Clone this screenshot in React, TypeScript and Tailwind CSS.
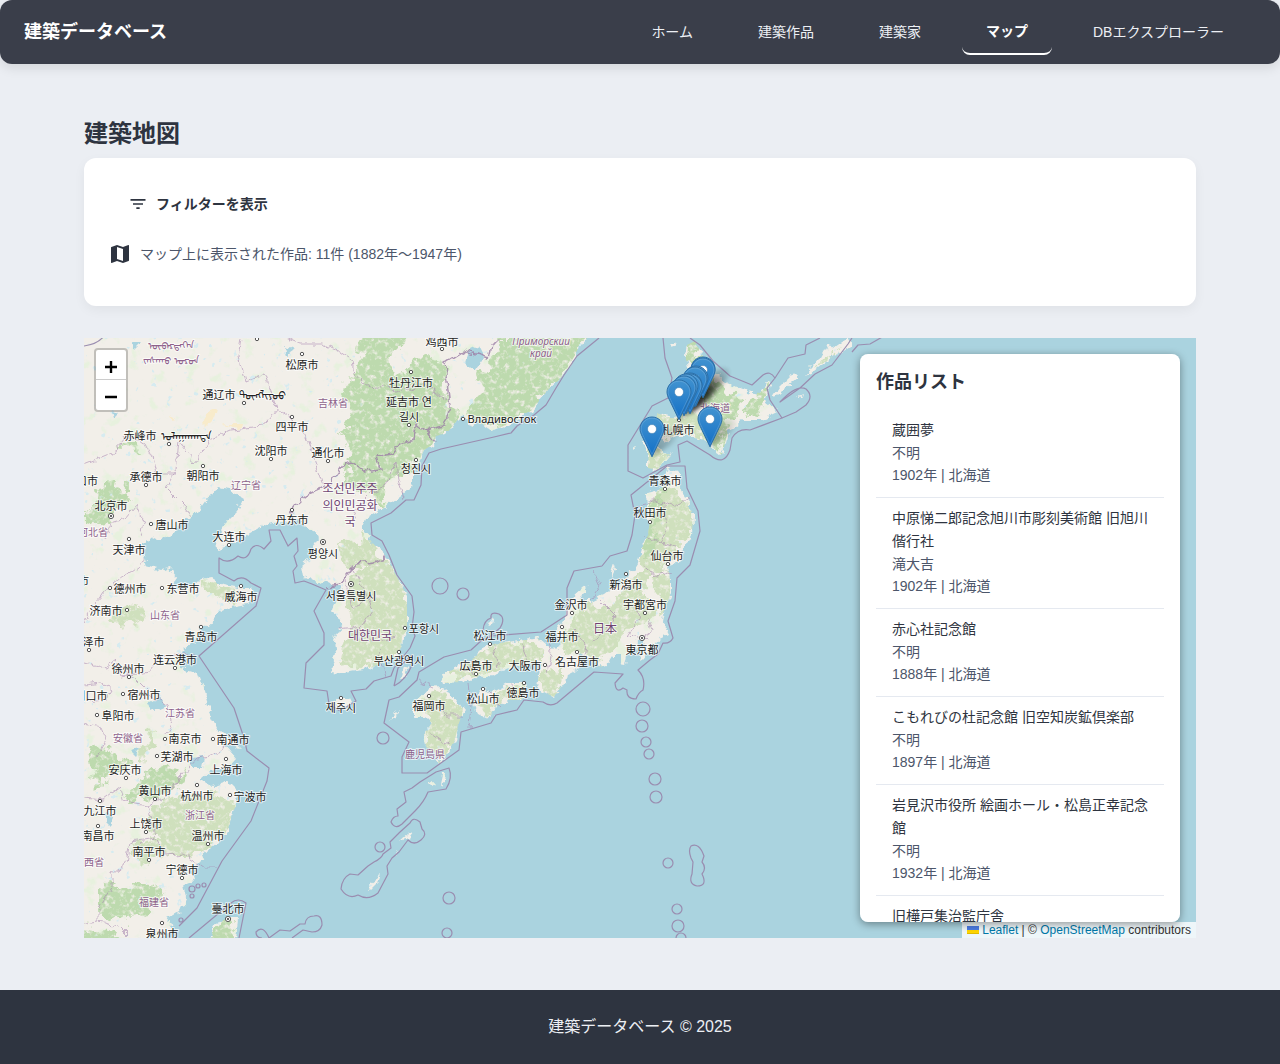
import React from "react";

const NAV = ["ホーム", "建築作品", "建築家", "マップ", "DBエクスプローラー"];

const WORKS = [
  { title: "蔵囲夢", architect: "不明", year: 1902 },
  { title: "中原悌二郎記念旭川市彫刻美術館 旧旭川偕行社", architect: "滝大吉", year: 1902 },
  { title: "赤心社記念館", architect: "不明", year: 1888 },
  { title: "こもれびの杜記念館 旧空知炭鉱倶楽部", architect: "不明", year: 1897 },
  { title: "岩見沢市役所 絵画ホール・松島正幸記念館", architect: "不明", year: 1932 },
  { title: "旧樺戸集治監庁舎", architect: "不明", year: 1919 },
];

const LAND = [
  "M587 338 577 352 561 378 547 391 531 411 511 423 491 431 477 421 471 426 464 413 459 418 447 433 436 436 432 445 424 450 419 461 414 471 414 485 404 493 384 508 366 519 362 528 368 537 377 548 386 556 396 575 407 595 407 615 407 630 402 637 401 650 394 657 381 663 371 668 357 671 344 673 332 671 336 655 334 641 342 625 332 610 337 598 341 588 327 581 317 583 304 576 302 565 314 555 314 545 318 538 312 530 301 521 291 521 274 523 264 525 250 533 237 541 217 548 216 541 221 530 227 521 237 511 244 498 231 490 217 488 206 501 199 511 184 521 171 535 158 541 150 537 144 545 144 556 147 566 161 570 169 568 177 578 174 588 184 590 197 581 212 578 224 585 240 588 251 588 257 598 247 605 231 608 217 615 209 626 199 625 202 634 194 641 184 648 179 660 181 668 197 673 204 691 211 715 217 728 227 736 241 749 224 743 237 758 227 768 211 771 201 780 212 786 227 781 237 791 236 805 231 818 227 833 217 843 207 851 201 861 191 871 194 881 184 885 187 898 181 911 167 919 174 929 160 938 160 950 60 950 60 320 590 320Z",
  "M687 345 695 341 700 351 710 368 727 383 747 391 760 393 770 380 765 400 778 411 760 420 743 420 728 431 722 455 710 445 690 435 677 435 667 441 660 438 657 448 672 456 663 461 658 470 648 468 648 455 643 441 655 435 657 413 677 418 683 405 690 388 688 368 685 355Z",
  "M667 468 680 473 680 488 688 501 693 515 692 535 683 551 680 561 668 565 670 581 670 595 663 615 662 623 668 635 655 641 650 650 643 658 640 660 645 640 638 640 637 650 627 653 625 665 620 664 620 655 613 655 607 665 600 667 590 660 580 654 578 660 581 665 576 670 566 675 564 683 554 697 544 692 537 687 539 675 541 665 531 663 511 667 497 672 487 678 474 677 461 682 444 683 441 675 457 668 474 658 487 645 521 640 537 637 544 643 554 650 561 643 557 630 567 615 567 608 574 595 586 585 587 591 577 601 591 601 604 595 613 588 625 578 637 565 642 548 648 535 650 521 648 505 647 493 658 490 667 485 664 474Z",
  "M479 693 484 688 491 692 507 683 524 683 527 693 521 700 507 700 496 707 489 718 479 713 474 703Z",
  "M429 688 441 687 454 697 464 710 459 723 454 743 447 753 439 765 436 753 431 750 426 747 424 733 432 723 426 717 414 717 414 703 421 697Z",
  "M207 950 214 925 227 918 237 918 234 950Z",
  "M331 703 338 698 350 698 352 702 344 707 335 708Z",
  "M772 398 780 386 792 374 798 378 786 388 777 397Z",
  "M805 375 820 358 827 345 835 347 848 338 852 345 832 357 813 372Z",
  "M440 785l3-13 2 1-1 8-3 6ZM429 783l4-3 3 3-4 3ZM401 841 409 834 413 832 408 839ZM611 574l3-9 1 5-4 8ZM633 449l2-4 2 2-2 4ZM670 345l3-4 2 4-2 3ZM488 622l4-2 2 3-4 2ZM795 398l8-2-3 2Z",
  "M367 892 371 882 381 875 379 880 371 888ZM390 719 397 712 400 710 396 716ZM396 849l2 2-1 3ZM401 681 405 667 408 668 405 678Z",
];

/* Densely wooded ranges, drawn as solid tints. */
const FOREST = [
  "M592 334 577 352 561 378 547 391 531 411 511 423 491 431 480 420 470 418 474 400 482 390 477 380 488 366 500 352 494 334Z",
  "M364 334h42l-5 12-12 12 8 14 18 4 8 16 24 6 10 10-4 22-14 8-12 12-14 8-6 20-18 2-10 2 8 12-4 12-14-14-14 4-8-22 4-28-10-10 10-24-8-18 8-16Z",
  "M404 364l18-6 22 6 2 40-20-6-12-18-8-4Z",
  "M84 515 105 486 122 484 134 498 118 506 112 520 96 524 84 522Z",
  "M120 444 134 440 140 454 128 448Z",
  "M127 800 140 776 158 768 176 774 188 770 182 784 166 792 152 802 136 798 122 802Z",
  "M98 894 110 884 124 890 140 884 158 886 164 896 156 906 150 914 130 916 118 922 98 918Z",
  "M88 752 100 746 118 754 128 766 110 774 98 790 92 776Z",
  "M84 926 100 928 120 938 120 945 84 945Z",
  "M687 345 695 341 700 354 710 376 727 390 742 396 736 416 726 426 722 455 704 438 706 420 700 400 692 384 690 366Z",
  "M764 386 770 382 766 400 758 412 746 416 750 402Z",
  "M664 480 672 478 662 500 658 530 650 560 640 548 650 520 650 500Z",
  "M214 928 228 920 236 920 230 945 210 945Z",
];

/* Lighter hill country. */
const HILLS = [
  "M150 814 166 800 196 792 218 796 234 800 232 816 226 832 212 844 200 854 186 858 170 858 162 842 148 830Z",
  "M364 532 386 556 396 575 409 595 408 630 402 640 401 650 384 664 360 668 340 662 346 640 352 620 346 600 350 580 364 566Z",
  "M340 548 360 540 372 548 366 564 346 570Z",
  "M657 413 677 418 686 412 700 420 712 434 722 455 700 438 680 434 662 436 658 448 672 456 660 470 648 468 648 440Z",
  "M664 490 680 488 692 512 692 535 676 550 670 563 656 575 640 592 656 606 646 622 622 634 612 655 594 664 584 650 566 655 562 640 574 618 590 604 612 606 630 586 644 560 650 530 650 496Z",
  "M668 566 672 580 672 598 662 618 656 600 658 580Z",
  "M442 682 460 668 482 650 521 640 540 640 546 652 534 664 500 668 478 676Z",
  "M478 706 494 694 507 684 526 684 524 698 500 704 488 718Z",
  "M540 670 562 668 562 684 554 697 540 690Z",
  "M418 700 434 690 452 698 464 710 456 740 446 753 438 765 428 748 426 730 432 720Z",
  "M206 578 220 584 236 592 234 602 218 598 204 590Z",
  "M112 614 140 608 150 618 134 626 114 622Z",
  "M146 740 156 730 150 750 144 764 138 752Z",
  "M130 842 150 838 166 848 150 862 136 858Z",
  "M813 370 826 352 838 348 828 360Z",
];

const SEA_BORDER = [
  "M599 338 577 356 564 375 556 388 546 405 534 415 517 426 511 433 494 437 441 449 429 453 422 466 421 485 414 500 406 500 391 513 371 523 372 535 382 541 389 555 397 575 412 596 414 612 412 628 415 636 410 648 394 668 391 676 374 681 366 689 351 691 356 701 340 711 329 704 327 691 304 688 306 663 324 645 324 633 314 611 326 590 312 584 304 581 295 583 293 571 297 566 294 556 298 551 297 538 288 546 280 530 269 530 271 541 264 549Q256 542 251 549 247 562 238 556 228 565 219 558V573L234 581Q242 574 251 583L261 588 256 606 199 656 234 708 244 738 247 751 269 768 267 781 251 821 222 861 197 908 179 926",
  "M189 938 231 903Q238 897 246 903L239 938",
  "M663 338 665 358 672 378 668 398 652 406 628 445 628 471 643 478 667 465 680 462 678 445 687 441 710 455Q724 467 730 450L732 438Q738 428 750 430L782 418 770 400 767 388 775 378Q770 370 763 375L752 385 730 376 713 361 700 345 690 338",
  "M602 566 610 556 627 551 632 535 635 515 631 495 667 466H685L687 488 698 511 700 531 690 565 677 578 675 601 668 621 673 638Q670 644 663 643L658 654 650 660 638 670Q646 678 643 690 638 693 636 699 626 699 627 690L623 688Q616 694 615 683L623 674 594 672 557 703Q550 707 543 702L524 700 517 710 496 715 491 723 461 732 459 750 427 773 402 773 402 757 409 742 384 723 389 700 399 697 417 680 419 672 444 657 471 650 482 640 491 636 541 632 567 615 567 588 574 571 602 566",
  "M483 630Q484 620 491 618 490 611 499 614 506 618 500 628L488 638",
  "M420 782 436 772 449 768Q453 778 446 789L428 792Q424 802 415 811L402 824Q395 830 391 822 393 816 398 816L397 809 406 802 404 792 412 788Z",
  "M410 823Q413 816 420 822L422 829Q428 834 421 840 414 846 408 840L399 852 392 858 387 866 388 874 378 893Q368 901 358 895 348 900 341 889 342 878 350 874L358 875 368 866 374 862Q382 858 383 854L391 848 390 842 400 832Z",
  "M775 378 788 358 805 354 806 345 820 338 M852 338 848 344 832 365 815 374 800 388 780 402Q797 384 806 389 814 396 806 405L796 412 782 418 M852 352 858 345 870 344 884 336 M262 938Q256 938 256 932 263 924 269 938 M269 938 280 930 290 931 300 924 305 924Q306 916 314 916 322 914 322 925 320 932 312 932L303 930 292 938",
  "M394 686 398 668 412 655 M394 686Q406 680 412 665",
  "M691 846Q699 842 704 856L702 862Q707 868 702 874 708 886 697 886 688 884 692 874L693 862 691 858Q688 850 691 846Z",
  "M84 346Q98 344 104 336",
];

const RINGS: [number, number, number][] = [
  [440, 586, 8], [463, 594, 6], [643, 709, 7], [642, 726, 6], [646, 742, 5], [649, 754, 5], [655, 779, 6],
  [656, 797, 6], [668, 863, 5], [677, 909, 5], [678, 926, 6], [681, 938, 5], [449, 898, 6], [447, 933, 5],
  [383, 738, 6], [380, 847, 5], [192, 889, 3], [198, 886, 2], [204, 885, 2], [192, 896, 2], [181, 920, 2],
];

const INLAND_BORDER = [
  "M241 338 238 356 245 382 264 374 271 392 277 408 262 426 232 430 210 440 194 462 179 442 176 470 166 488 184 506 191 518",
  "M286 338 300 344 322 344 340 352 352 360 354 374 370 388 384 386",
  "M277 408 298 424 306 436 314 460 324 486",
  "M84 464 104 456 118 450 124 436 146 444 152 456 156 474 176 474",
  "M104 540 112 522 126 518 136 506 144 524 140 538",
  "M84 622 100 598 108 586 130 572 146 560",
  "M84 662 106 668 116 660 122 676 150 672 162 656 196 654",
  "M84 684 100 682 112 690 106 700 84 702 M84 724 100 728 106 742 98 756",
  "M112 664 134 678 150 694 168 706 172 720 166 734",
  "M84 798 104 800 120 788 124 802 148 806 156 838 166 856 184 854 196 862 204 868 218 868",
  "M148 806 170 792 180 776 196 758 212 756 226 746",
  "M156 838 130 842 126 862 112 874 112 888 98 910 98 922 84 924",
  "M98 922 118 926 130 938",
  "M384 386 400 392 424 384 446 400",
  "M398 480 404 498 M398 480 396 462 384 488 372 492 360 504 352 520",
  "M351 566 364 590 372 610 360 628 384 640 398 636 M366 600 352 608 346 580",
  "M338 628 354 626 372 640 M378 650 386 676",
  "M636 505 658 500 672 506 690 498 M664 504 666 530 660 542 642 536 M660 542 676 546 M642 566 656 576 672 572",
  "M600 600 616 616 606 632 592 640 M630 600 640 618 628 636 648 640 M648 618 652 632 640 640",
  "M574 630 586 644 584 656 M546 640 552 656 548 672 M520 642 528 660 M494 646 498 668 M470 660 474 676",
  "M490 692 500 706 M512 684 514 700 M432 700 446 716 462 716 M430 734 444 744 450 742",
  "M417 680 432 686 M470 684 472 706 470 728 M594 572 600 586 590 600",
];

const KOREA_BORDER = [
  "M434 441 427 431 436 427 444 426 450 408 447 381 444 363 464 350 489 358 492 345 499 338",
  "M427 431 416 424 414 440 400 444 394 452 376 454 380 470 366 472 352 462 344 464 330 484 312 492 296 504 290 512",
  "M326 586 340 584 356 564 372 562 386 558",
];

const LAKES = [
  "M470 350 478 346 484 358 474 372 466 364Z", "M148 704 160 698 166 706 152 712Z", "M192 758 204 756 202 768 192 768Z",
  "M106 812 114 814 110 826 106 822Z", "M130 750 140 748 136 756Z", "M286 346 294 350 288 354Z",
  "M112 412 118 414 114 418Z", "M132 342 142 342 134 350Z",
];

type Label = [string, number, number];

const CITIES: Label[] = [
  ["松原市", 302, 369], ["通辽市", 219, 399], ["四平市", 292, 431], ["赤峰市", 140, 440], ["沈阳市", 271, 455],
  ["通化市", 328, 457], ["承德市", 146, 481], ["朝阳市", 203, 480], ["口市", 87, 485], ["北京市", 111, 510],
  ["唐山市", 172, 529], ["丹东市", 292, 524], ["大连市", 229, 541], ["天津市", 129, 554], ["德州市", 130, 593],
  ["东营市", 183, 593], ["威海市", 241, 601], ["济南市", 106, 615], ["青岛市", 201, 641], ["菏泽市", 88, 646],
  ["连云港市", 175, 664], ["徐州市", 128, 673], ["周口市", 91, 700], ["宿州市", 144, 699], ["阜阳市", 118, 720],
  ["南京市", 185, 743], ["南通市", 233, 744], ["芜湖市", 177, 761], ["安庆市", 125, 774], ["上海市", 226, 774],
  ["黄山市", 155, 795], ["杭州市", 197, 800], ["宁波市", 250, 801], ["九江市", 100, 815], ["上饶市", 146, 828],
  ["南昌市", 98, 840], ["温州市", 208, 840], ["南平市", 149, 856], ["宁德市", 182, 874], ["臺北市", 228, 913],
  ["泉州市", 162, 938], ["鸡西市", 442, 346], ["牡丹江市", 411, 387], ["延吉市 연", 409, 406], ["길시", 409, 421],
  ["청진시", 416, 473], ["평양시", 323, 558], ["서울특별시", 351, 600], ["포항시", 424, 633], ["부산광역시", 399, 665],
  ["제주시", 341, 712], ["福岡市", 429, 710], ["広島市", 476, 670], ["松江市", 490, 640], ["松山市", 483, 703],
  ["徳島市", 523, 697], ["大阪市", 525, 670], ["福井市", 562, 641], ["名古屋市", 577, 666], ["金沢市", 571, 609],
  ["新潟市", 626, 589], ["宇都宮市", 645, 609], ["東京都", 642, 654], ["仙台市", 667, 560], ["秋田市", 650, 517],
  ["青森市", 665, 485], ["札幌市", 678, 434], ["州市", 78, 585],
];

const PROVINCES: Label[] = [
  ["吉林省", 333, 407], ["辽宁省", 246, 489], ["河北省", 93, 536], ["山东省", 165, 619], ["江苏省", 180, 717],
  ["安徽省", 128, 742], ["浙江省", 200, 819], ["江西省", 89, 866], ["福建省", 154, 906], ["鹿児島県", 425, 758],
  ["北海道", 715, 412],
];

const COUNTRIES: Label[] = [["조선민주주", 350, 493], ["의인민공화", 350, 510], ["국", 350, 526], ["대한민국", 370, 640], ["日本", 605, 633]];

const DOTS: [number, number][] = [
  [302, 354], [257, 339], [244, 403], [292, 417], [169, 444], [271, 459], [328, 461], [146, 485], [203, 466], [151, 524],
  [292, 510], [229, 545], [129, 539], [110, 588], [162, 588], [241, 586], [127, 610], [201, 627], [89, 650], [175, 668],
  [129, 677], [123, 694], [97, 715], [165, 739], [213, 739], [157, 756], [126, 778], [226, 759], [155, 799], [197, 785],
  [230, 795], [100, 801], [146, 832], [98, 826], [208, 844], [149, 860], [182, 878], [162, 923], [442, 349], [411, 372],
  [409, 425], [463, 419], [416, 460], [405, 628], [399, 652], [341, 698], [429, 696], [476, 674], [490, 644], [483, 689],
  [524, 683], [545, 665], [562, 627], [577, 652], [572, 613], [626, 574], [645, 613], [668, 564], [650, 522], [665, 489],
  [679, 420],
];

const CAPITALS: [number, number][] = [[111, 516], [323, 542], [351, 584], [642, 638], [228, 919]];

const MARKERS: [number, number][] = [
  [703, 369], [703, 370], [696, 378], [695, 379], [690, 385], [690, 386], [686, 386], [684, 388], [679, 392], [652, 429], [710, 419],
];

function MapCanvas() {
  return (
    <svg
      className="block h-full w-full"
      viewBox="84 338 1112 600"
      preserveAspectRatio="xMidYMid slice"
      role="img"
      aria-label="建築作品の地図"
    >
      <defs>
        <filter id="coast" x="0" y="0" width="100%" height="100%">
          <feTurbulence type="fractalNoise" baseFrequency="0.13" numOctaves="3" seed="4" result="n" />
          <feDisplacementMap in="SourceGraphic" in2="n" scale="9" xChannelSelector="R" yChannelSelector="G" result="land" />
          <feTurbulence type="fractalNoise" baseFrequency="0.07" numOctaves="4" seed="13" />
          <feColorMatrix type="matrix" values="0 0 0 0 0.80  0 0 0 0 0.88  0 0 0 0 0.73  7 0 0 0 -4.2" />
          <feComposite in2="land" operator="in" result="scrub" />
          <feTurbulence type="fractalNoise" baseFrequency="0.12" numOctaves="3" seed="33" />
          <feColorMatrix type="matrix" values="0 0 0 0 0.67  0 0 0 0 0.83  0 0 0 0 0.87  0 14 0 0 -10" />
          <feComposite in2="land" operator="in" result="ponds" />
          <feMerge>
            <feMergeNode in="land" />
            <feMergeNode in="scrub" />
            <feMergeNode in="ponds" />
          </feMerge>
        </filter>
        <filter id="woods" x="-5%" y="-5%" width="110%" height="110%">
          <feTurbulence type="fractalNoise" baseFrequency="0.08" numOctaves="5" seed="9" result="n" />
          <feDisplacementMap in="SourceGraphic" in2="n" scale="22" xChannelSelector="R" yChannelSelector="G" result="d" />
          <feTurbulence type="fractalNoise" baseFrequency="0.2" numOctaves="3" seed="21" />
          <feColorMatrix type="matrix" values="0 0 0 0 0  0 0 0 0 0  0 0 0 0 0  3 0 0 0 -0.5" result="m" />
          <feComposite in="d" in2="m" operator="in" />
        </filter>
        <filter id="rough" x="-10%" y="-10%" width="120%" height="120%">
          <feTurbulence type="fractalNoise" baseFrequency="0.12" numOctaves="2" seed="6" result="n" />
          <feDisplacementMap in="SourceGraphic" in2="n" scale="9" xChannelSelector="R" yChannelSelector="G" />
        </filter>
        <filter id="soft" x="-50%" y="-50%" width="200%" height="200%">
          <feGaussianBlur stdDeviation="2" />
        </filter>
        <clipPath id="land-area">
          {LAND.map((d) => (
            <path key={d} d={d} />
          ))}
        </clipPath>
        <linearGradient id="pin" x1="0" y1="0" x2="0" y2="1">
          <stop offset="0" stopColor="#4293d0" />
          <stop offset="1" stopColor="#126fc6" />
        </linearGradient>
        <linearGradient id="pin-shade" x1="0" y1="1" x2="1" y2="0">
          <stop offset="0" stopColor="#000" stopOpacity="0.7" />
          <stop offset="1" stopColor="#000" stopOpacity="0.05" />
        </linearGradient>
      </defs>

      <rect x="-1000" y="0" width="3280" height="1300" fill="#aad3df" />
      <g filter="url(#coast)" fill="#f2efe9">
        {LAND.map((d) => (
          <path key={d} d={d} />
        ))}
      </g>
      <g clipPath="url(#land-area)">
        <g filter="url(#woods)" fill="#cfe0bd">
          {HILLS.map((d) => (
            <path key={d} d={d} />
          ))}
        </g>
        <g filter="url(#woods)" fill="#bddaae">
          {FOREST.map((d) => (
            <path key={d} d={d} />
          ))}
        </g>
        <g filter="url(#rough)" fill="#f8ebcb">
          <path d="M200 424 206 414 216 410 214 418 204 428ZM222 424 244 424 238 428ZM168 416 176 418 174 421Z" />
        </g>
      </g>
      <g filter="url(#rough)" fill="#aad3df">
        {LAKES.map((d) => (
          <path key={d} d={d} />
        ))}
      </g>
      <g filter="url(#rough)" fill="none" stroke="#a584ae" strokeOpacity="0.55">
        {INLAND_BORDER.map((d) => (
          <path key={d} d={d} />
        ))}
      </g>
      <g filter="url(#rough)" fill="none" stroke="#9c7fa6" strokeOpacity="0.8" strokeWidth="1.5">
        {KOREA_BORDER.map((d) => (
          <path key={d} d={d} />
        ))}
      </g>
      <g fill="none" stroke="#9a8db0" strokeWidth="1.2" strokeLinejoin="round">
        {SEA_BORDER.map((d) => (
          <path key={d} d={d} />
        ))}
        {RINGS.map(([x, y, r]) => (
          <circle key={`${x}-${y}`} cx={x} cy={y} r={r} />
        ))}
      </g>

      <g fill="#fff" stroke="#555" strokeWidth="1">
        {DOTS.map(([x, y]) => (
          <circle key={`${x}-${y}`} cx={x} cy={y} r="1.7" />
        ))}
        {CAPITALS.map(([x, y]) => (
          <g key={`${x}-${y}`}>
            <circle cx={x} cy={y} r="2.6" />
            <circle cx={x} cy={y} r="1" fill="#333" stroke="none" />
          </g>
        ))}
      </g>

      <g
        textAnchor="middle"
        strokeLinejoin="round"
        className="[font-family:'Noto_Sans','Noto_Sans_CJK_SC','Noto_Sans_CJK_KR',sans-serif] [paint-order:stroke]"
        stroke="#fff"
        strokeOpacity="0.7"
        strokeWidth="2"
      >
        <g fill="#8d618b" fontSize="10">
          {PROVINCES.map(([t, x, y]) => (
            <text key={t} x={x} y={y}>{t}</text>
          ))}
          <text x="171" y="349">ᠥᠪᠡᠷᠲᠡᠭᠡᠨ</text>
          <text x="171" y="364">ᠵᠠᠰᠠᠬᠤ ᠣᠷᠣᠨ</text>
          <text x="541" y="345" fontStyle="italic">Приморский</text>
          <text x="541" y="357" fontStyle="italic">край</text>
        </g>
        <g fill="#6f4472" fontSize="12">
          {COUNTRIES.map(([t, x, y]) => (
            <text key={t} x={x} y={y}>{t}</text>
          ))}
        </g>
        <g fill="#222" fontSize="11">
          {CITIES.map(([t, x, y]) => (
            <text key={t + x} x={x} y={y}>{t}</text>
          ))}
          <text x="502" y="423">Владивосток</text>
          <text x="262" y="399">ᠲᠦᠩᠯᠢᠶᠣᠣ</text>
          <text x="186" y="440">ᠤᠯᠠᠭᠠᠨᠬᠠᠳᠠ</text>
        </g>
      </g>

      {MARKERS.map(([x, y]) => (
        <path
          key={`${x}-${y}`}
          d={`M${x} ${y + 28}L${x + 6} ${y + 8}Q${x + 16} ${y - 4} ${x + 25} ${y - 1}Q${x + 29} ${y + 6} ${x + 18} ${y + 16}Z`}
          fill="url(#pin-shade)"
          opacity="0.5"
          filter="url(#soft)"
        />
      ))}
      {MARKERS.map(([x, y]) => (
        <g key={`${x}-${y}`} transform={`translate(${x - 12.5} ${y - 12.5})`}>
          <path
            d="M12.5 .5C5.9 .5 .5 5.9 .5 12.5c0 2.4 1 5 2.3 7.6L12.5 40.3l9.7-20.2c1.3-2.6 2.3-5.2 2.3-7.6C24.5 5.9 19.1 .5 12.5 .5Z"
            fill="url(#pin)"
            stroke="#2c6fa7"
          />
          <path
            d="M12.5 1.6C6.5 1.6 1.6 6.5 1.6 12.5c0 2.2 1 4.6 2.2 7.1L12.5 37.8l8.7-18.2c1.2-2.5 2.2-4.9 2.2-7.1C23.4 6.5 18.5 1.6 12.5 1.6Z"
            fill="none"
            stroke="#fff"
            strokeOpacity="0.15"
          />
          <circle cx="12.5" cy="12.5" r="4.5" fill="#fff" stroke="#2c6fa7" strokeOpacity="0.5" />
        </g>
      ))}
    </svg>
  );
}

function Header() {
  return (
    <header className="flex h-16 items-center justify-between rounded-xl bg-[#3a3e4a] px-6 shadow-[0_4px_12px_rgba(0,0,0,0.1)]">
      <a href="#" className="text-lg font-bold text-white">
        建築データベース
      </a>
      <nav className="flex items-center gap-[17px] px-2 text-sm">
        {NAV.map((item) => (
          <a
            key={item}
            href="#"
            aria-current={item === "マップ" ? "page" : undefined}
            className={
              item === "マップ"
                ? "rounded-lg border-b-2 border-white px-6 py-3 font-bold text-white"
                : "rounded-lg px-6 py-3 text-[#eceff4]"
            }
          >
            {item}
          </a>
        ))}
      </nav>
    </header>
  );
}

function FilterCard() {
  return (
    <section className="rounded-xl bg-white px-6 pt-6 pb-10 shadow-[0_4px_12px_rgba(0,0,0,0.05)]">
      <button type="button" className="flex h-11 items-center gap-2 px-5 text-sm font-bold text-[#2e3440]">
        <svg viewBox="0 0 24 24" className="size-5" fill="currentColor" aria-hidden="true">
          <path d="M10 18h4v-2h-4v2zM3 6v2h18V6H3zm3 7h12v-2H6v2z" />
        </svg>
        フィルターを表示
      </button>
      <p className="mt-4 flex items-center gap-2 text-sm leading-6 text-[#4c566a]">
        <svg viewBox="0 0 24 24" className="size-6 text-[#2e3440]" fill="currentColor" aria-hidden="true">
          <path d="M20.5 3l-.16.03L15 5.1 9 3 3.36 4.9c-.21.07-.36.25-.36.48V20.5c0 .28.22.5.5.5l.16-.03L9 18.9l6 2.1 5.64-1.9c.21-.07.36-.25.36-.48V3.5c0-.28-.22-.5-.5-.5zM15 19l-6-2.11V5l6 2.11V19z" />
        </svg>
        マップ上に表示された作品: 11件 (1882年〜1947年)
      </p>
    </section>
  );
}

function WorkList() {
  return (
    <aside className="absolute inset-y-4 right-4 w-80 overflow-y-auto rounded-lg bg-white p-4 shadow-[0_2px_8px_rgba(0,0,0,0.4)] [scrollbar-width:none]">
      <h2 className="mb-4 text-lg leading-6 font-bold text-[#2e3440]">作品リスト</h2>
      <ul className="text-sm">
        {WORKS.map((w) => (
          <li key={w.title} className="border-b border-[#e5e9f0] px-4 pt-[9px] pb-[11px] leading-[22px] text-[#4c566a]">
            <h3 className="leading-[23px] text-[#2e3440]">{w.title}</h3>
            <p>{w.architect}</p>
            <p>{w.year}年 | 北海道</p>
          </li>
        ))}
      </ul>
    </aside>
  );
}

function MapSection() {
  return (
    <section className="relative mt-8 h-[600px] overflow-hidden bg-[#aad3df]">
      <MapCanvas />
      <div className="absolute top-[10px] left-[10px] flex flex-col overflow-hidden rounded border-2 border-black/20 bg-white bg-clip-padding text-black">
        <button type="button" aria-label="ズームイン" className="flex size-[30px] items-center justify-center border-b border-[#ccc]">
          <svg viewBox="0 0 14 14" className="mt-1 size-[14px]" stroke="currentColor" strokeWidth="2.4" aria-hidden="true">
            <path d="M1 7h12M7 1v12" />
          </svg>
        </button>
        <button type="button" aria-label="ズームアウト" className="flex size-[30px] items-center justify-center">
          <svg viewBox="0 0 14 14" className="mt-1 size-[14px]" stroke="currentColor" strokeWidth="2.4" aria-hidden="true">
            <path d="M1 7h12" />
          </svg>
        </button>
      </div>
      <div className="absolute right-0 bottom-0 flex h-4 items-center gap-[3px] bg-white/80 px-[5px] text-xs leading-4 text-[#333]">
        <svg viewBox="0 0 12 8" className="h-2 w-3" aria-hidden="true">
          <path fill="#4C7BE1" d="M0 0h12v4H0z" />
          <path fill="#FFD500" d="M0 4h12v3H0z" />
          <path fill="#E0BC00" d="M0 7h12v1H0z" />
        </svg>
        <span>
          <a href="#" className="text-[#0078a8]">Leaflet</a> | © <a href="#" className="text-[#0078a8]">OpenStreetMap</a> contributors
        </span>
      </div>
      <WorkList />
    </section>
  );
}

export default function App() {
  return (
    <div className="flex min-h-screen flex-col bg-[#ebeef3] [font-family:'Liberation_Sans','Noto_Sans_CJK_JP',sans-serif]" lang="ja">
      <Header />
      <main className="mx-auto w-full max-w-[1160px] grow px-6 py-[52px]">
        <h1 className="mb-2 pt-[2px] text-2xl leading-8 font-bold text-[#2e3440]">建築地図</h1>
        <FilterCard />
        <MapSection />
      </main>
      <footer className="bg-[#2e3440] py-6 text-center leading-[26px] text-[#eceff4]">建築データベース © 2025</footer>
    </div>
  );
}
